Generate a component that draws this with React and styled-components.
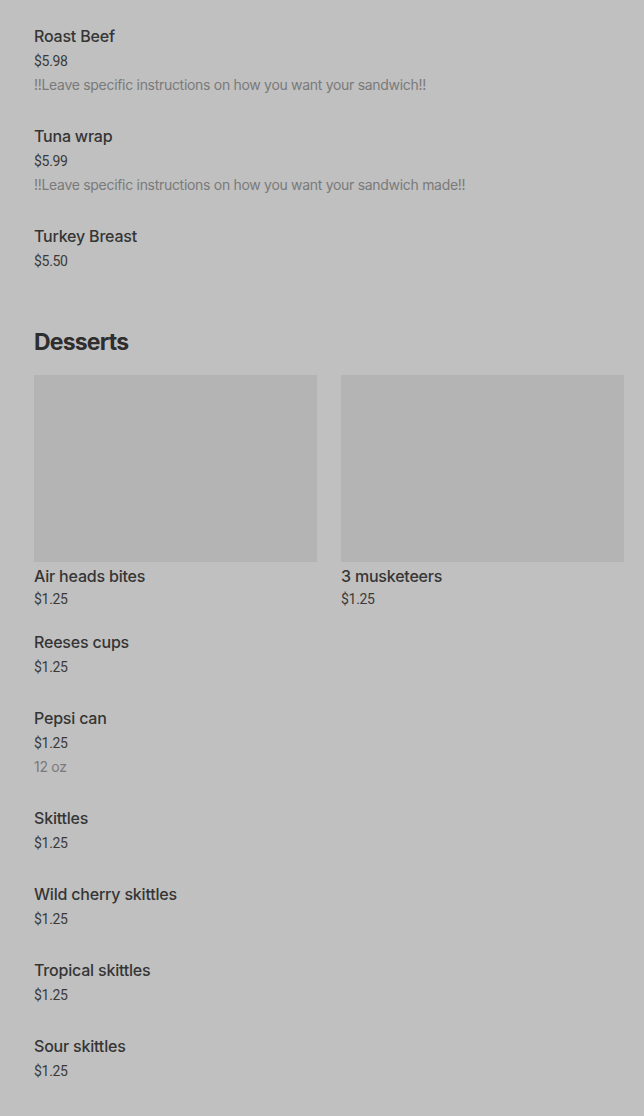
import React from 'react'
import styled, { createGlobalStyle } from 'styled-components'

const sandwiches = [
  { name: 'Roast Beef', price: '$5.98', note: '!!Leave specific instructions on how you want your sandwich!!' },
  { name: 'Tuna wrap', price: '$5.99', note: '!!Leave specific instructions on how you want your sandwich made!!' },
  { name: 'Turkey Breast', price: '$5.50' }
]

const featured = [
  { name: 'Air heads bites', price: '$1.25' },
  { name: '3 musketeers', price: '$1.25' }
]

const desserts = [
  { name: 'Reeses cups', price: '$1.25' },
  { name: 'Pepsi can', price: '$1.25', note: '12 oz' },
  { name: 'Skittles', price: '$1.25' },
  { name: 'Wild cherry skittles', price: '$1.25' },
  { name: 'Tropical skittles', price: '$1.25' },
  { name: 'Sour skittles', price: '$1.25' }
]

function MenuItem ({ item }) {
  return (
    <Item>
      <ItemName>{item.name}</ItemName>
      <Price>{item.price}</Price>
      {item.note && <Note>{item.note}</Note>}
    </Item>
  )
}

function App () {
  return (
    <Page>
      <GlobalStyle />
      <List>
        {sandwiches.map(item => <MenuItem key={item.name} item={item} />)}
      </List>

      <SectionTitle>Desserts</SectionTitle>

      <CardGrid>
        {featured.map(item => (
          <Card key={item.name}>
            <Thumb />
            <CardName>{item.name}</CardName>
            <CardPrice>{item.price}</CardPrice>
          </Card>
        ))}
      </CardGrid>

      <List>
        {desserts.map(item => <MenuItem key={item.name} item={item} />)}
      </List>
    </Page>
  )
}

const GlobalStyle = createGlobalStyle`
  html, body {
    margin: 0;
    background: #c0c0c0;
  }
  body {
    font-family: Inter, Roboto, "Liberation Sans", sans-serif;
  }
`

const Page = styled.div`
  background: #c0c0c0;
  min-height: 1116px;
  padding: 24px 20px 0 34px;
  box-sizing: border-box;
`

const List = styled.div`
  display: flex;
  flex-direction: column;
  gap: 27px;
`

const Item = styled.div`
  display: flex;
  flex-direction: column;
`

const ItemName = styled.div`
  color: #353535;
  font-size: 16px;
  font-weight: 500;
  line-height: 24px;
  letter-spacing: -0.2px;
`

const Price = styled.div`
  color: #3a3a3a;
  font-family: Roboto, sans-serif;
  font-size: 14px;
  line-height: 24px;
  letter-spacing: -0.3px;
  padding-top: 1px;
`

const Note = styled.div`
  color: #7a7a7a;
  font-size: 14px;
  line-height: 24px;
  letter-spacing: -0.3px;
`

const SectionTitle = styled.h2`
  color: #2e2e2e;
  font-size: 23px;
  font-weight: 700;
  line-height: 36px;
  letter-spacing: -0.8px;
  margin: 51px 0 15px;
`

const CardGrid = styled.div`
  display: grid;
  grid-template-columns: 1fr 1fr;
  gap: 24px;
  margin-bottom: 20px;
`

const Card = styled.div`
  display: flex;
  flex-direction: column;
`

const Thumb = styled.div`
  background: #b4b4b4;
  height: 187px;
  margin-bottom: 2px;
`

const CardName = styled.div`
  color: #353535;
  font-size: 16px;
  font-weight: 500;
  line-height: 24px;
  letter-spacing: -0.2px;
`

const CardPrice = styled.div`
  color: #3a3a3a;
  font-family: Roboto, sans-serif;
  font-size: 14px;
  line-height: 22px;
  letter-spacing: -0.3px;
`

export default App
